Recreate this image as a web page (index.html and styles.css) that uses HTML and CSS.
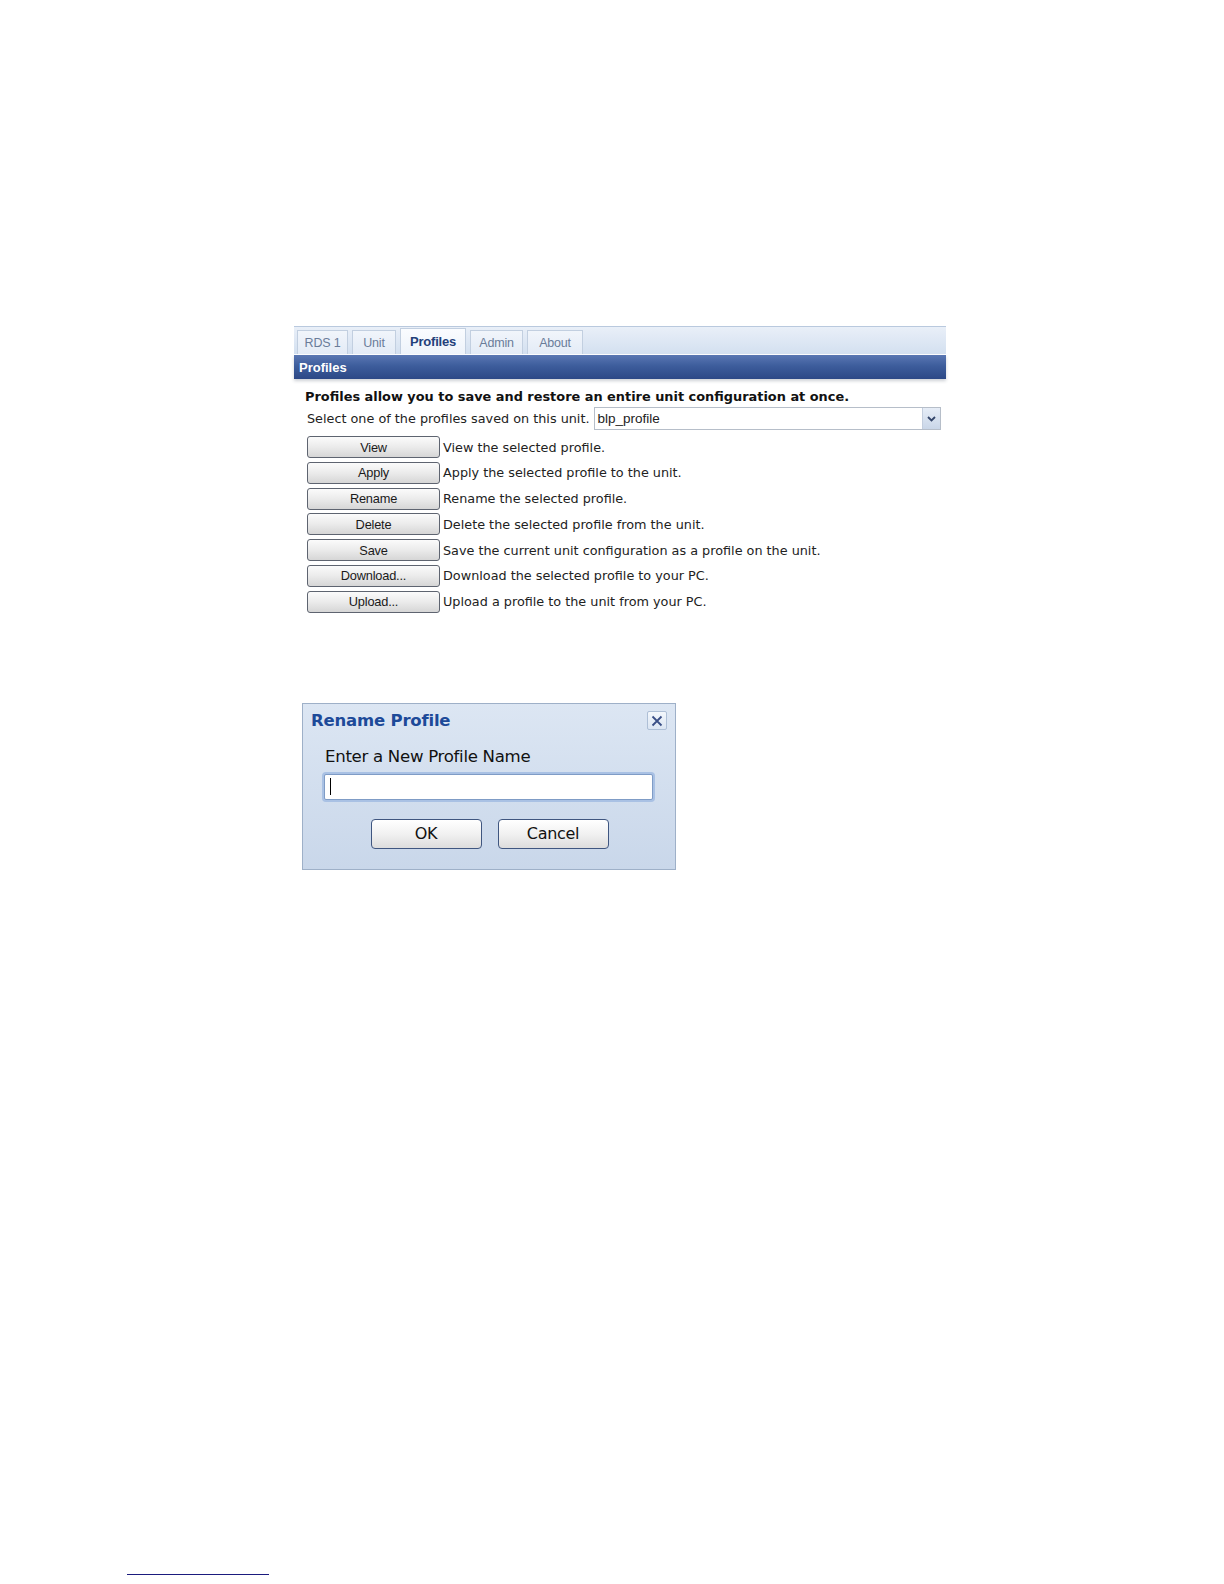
FILE: index.html
```html
<!DOCTYPE html>
<html>
<head>
<meta charset="utf-8">
<link rel="stylesheet" href="styles.css">
</head>
<body>
<div class="page">
  <div class="panel">
    <div class="tabbar">
      <span class="tab">RDS 1</span>
      <span class="tab">Unit</span>
      <span class="tab active">Profiles</span>
      <span class="tab">Admin</span>
      <span class="tab">About</span>
    </div>
    <div class="header">Profiles</div>
    <div class="content">
      <p class="intro">Profiles allow you to save and restore an entire unit configuration at once.</p>
      <div class="selectrow">
        <span class="selectlabel">Select one of the profiles saved on this unit.</span>
        <div class="select">
          <span class="selectval">blp_profile</span>
          <span class="selectbtn">
            <svg width="9" height="6" viewBox="0 0 9 6"><path d="M1 1 L4.5 4.5 L8 1" fill="none" stroke="#34466a" stroke-width="1.8"/></svg>
          </span>
        </div>
      </div>
      <div class="actions">
        <div class="row"><span class="btn">View</span><span class="desc">View the selected profile.</span></div>
        <div class="row"><span class="btn">Apply</span><span class="desc">Apply the selected profile to the unit.</span></div>
        <div class="row"><span class="btn">Rename</span><span class="desc">Rename the selected profile.</span></div>
        <div class="row"><span class="btn">Delete</span><span class="desc">Delete the selected profile from the unit.</span></div>
        <div class="row"><span class="btn">Save</span><span class="desc">Save the current unit configuration as a profile on the unit.</span></div>
        <div class="row"><span class="btn">Download...</span><span class="desc">Download the selected profile to your PC.</span></div>
        <div class="row"><span class="btn">Upload...</span><span class="desc">Upload a profile to the unit from your PC.</span></div>
      </div>
    </div>
  </div>

  <div class="dialog">
    <div class="dlg-head">
      <span class="dlg-title">Rename Profile</span>
      <span class="dlg-close">
        <svg width="14" height="14" viewBox="0 0 14 14"><path d="M2.5 2.5 L11.5 11.5 M11.5 2.5 L2.5 11.5" stroke="#3a4f86" stroke-width="1.8" fill="none"/></svg>
      </span>
    </div>
    <div class="dlg-label">Enter a New Profile Name</div>
    <div class="dlg-input"><span class="caret"></span></div>
    <div class="dlg-buttons">
      <span class="dbtn">OK</span>
      <span class="dbtn">Cancel</span>
    </div>
  </div>

  <div class="footrule"></div>
</div>
</body>
</html>
```

FILE: styles.css
```css
html, body {
  margin: 0;
  padding: 0;
  background: #ffffff;
}

.page {
  width: 1224px;
  height: 1584px;
  padding-top: 326px;
  box-sizing: border-box;
  display: flex;
  flex-direction: column;
}

.panel {
  margin-left: 294px;
  width: 652px;
  font-family: "DejaVu Sans", Verdana, sans-serif;
}

.tabbar {
  height: 28px;
  box-sizing: border-box;
  border-top: 1px solid #b9c9de;
  background: linear-gradient(#e9eff8, #d3e0f0);
  display: flex;
  align-items: flex-end;
  gap: 4px;
  padding-left: 3px;
}

.tab {
  height: 24px;
  box-sizing: border-box;
  border: 1px solid #c2cfe0;
  border-bottom: none;
  background: linear-gradient(#f1f5fb, #e3ebf6);
  font-family: "Liberation Sans", Tahoma, sans-serif;
  font-size: 12.5px;
  color: #6a7c99;
  display: flex;
  align-items: center;
  justify-content: center;
  white-space: nowrap;
  letter-spacing: -0.2px;
}

.tab:nth-child(1) { width: 51px; }
.tab:nth-child(2) { width: 44px; }
.tab:nth-child(3) { width: 66px; }
.tab:nth-child(4) { width: 53px; }
.tab:nth-child(5) { width: 56px; }

.tab.active {
  background: linear-gradient(#fafcff, #eef3fa);
  color: #23407a;
  font-weight: bold;
  font-size: 13px;
  height: 26px;
}

.header {
  height: 24px;
  margin-top: 1px;
  background: linear-gradient(#5a77b3, #3d5d9c 45%, #2c4886);
  color: #ffffff;
  font-family: "Liberation Sans", Tahoma, sans-serif;
  font-weight: bold;
  font-size: 13px;
  display: flex;
  align-items: center;
  padding-left: 5px;
  box-shadow: 0 2px 3px rgba(60, 70, 90, 0.25);
}

.content {
  padding: 9px 0 0 11px;
}

.intro {
  margin: 0;
  font-weight: bold;
  font-size: 12.9px;
  color: #111111;
  height: 18px;
  line-height: 18px;
}

.selectrow {
  display: flex;
  align-items: center;
  margin-top: 1px;
  height: 23px;
  margin-left: 2px;
}

.selectlabel {
  font-size: 12.8px;
  color: #222222;
  margin-right: 4px;
  white-space: nowrap;
}

.select {
  flex: 1;
  margin-right: 5px;
  height: 23px;
  box-sizing: border-box;
  border: 1px solid #b6bec9;
  background: #ffffff;
  display: flex;
  align-items: center;
}

.selectval {
  flex: 1;
  font-family: "Liberation Sans", Tahoma, sans-serif;
  font-size: 13.5px;
  color: #222222;
  padding-left: 3px;
}

.selectbtn {
  width: 18px;
  height: 21px;
  box-sizing: border-box;
  border-left: 1px solid #c3cede;
  background: linear-gradient(#e6edf7, #c9d6e8);
  display: flex;
  align-items: center;
  justify-content: center;
}

.actions {
  margin-top: 6px;
  margin-left: 2px;
  display: flex;
  flex-direction: column;
  gap: 3.8px;
}

.row {
  display: flex;
  align-items: center;
  height: 22px;
}

.btn {
  width: 133px;
  height: 22px;
  box-sizing: border-box;
  border: 1px solid #5e6470;
  border-radius: 3px;
  background: linear-gradient(#fbfbfb, #ebebeb 50%, #d6d6d6);
  font-family: "Liberation Sans", Tahoma, sans-serif;
  font-size: 12.8px;
  color: #1a1a1a;
  display: flex;
  align-items: center;
  justify-content: center;
  letter-spacing: -0.2px;
  flex-shrink: 0;
}

.desc {
  margin-left: 3px;
  font-size: 12.8px;
  color: #222222;
  white-space: nowrap;
}

/* Dialog */
.dialog {
  margin-top: 90px;
  margin-left: 302px;
  width: 374px;
  height: 167px;
  box-sizing: border-box;
  border: 1px solid #9eb0c8;
  background: linear-gradient(#dce6f3, #c9d7ea);
  font-family: "DejaVu Sans", "Lucida Grande", sans-serif;
  padding: 7px 8px 0 8px;
}

.dlg-head {
  display: flex;
  justify-content: space-between;
  align-items: center;
  height: 20px;
}

.dlg-title {
  font-weight: bold;
  font-size: 16.5px;
  color: #1d4a99;
  letter-spacing: -0.2px;
}

.dlg-close {
  width: 20px;
  height: 19px;
  box-sizing: border-box;
  border: 1px solid #aebfd6;
  border-radius: 2px;
  background: linear-gradient(#f3f7fc, #dbe5f2);
  display: flex;
  align-items: center;
  justify-content: center;
}

.dlg-label {
  margin-top: 16px;
  margin-left: 14px;
  font-size: 16.6px;
  color: #111111;
  letter-spacing: -0.3px;
  height: 20px;
  line-height: 20px;
}

.dlg-input {
  margin-top: 7px;
  margin-left: 13px;
  width: 329px;
  height: 26px;
  box-sizing: border-box;
  border: 1px solid #7f9cc6;
  background: #ffffff;
  box-shadow: 0 0 0 2px #a9c1e4;
  border-radius: 2px;
  display: flex;
  align-items: center;
  padding-left: 5px;
}

.caret {
  width: 1px;
  height: 17px;
  background: #000000;
}

.dlg-buttons {
  display: flex;
  justify-content: center;
  gap: 16px;
  margin-top: 19px;
  padding-left: 1px;
}

.dbtn {
  width: 111px;
  height: 30px;
  box-sizing: border-box;
  border: 1px solid #3f5680;
  border-radius: 4px;
  background: linear-gradient(#ffffff, #f1f1f1 50%, #dcdcdc);
  font-family: "DejaVu Sans", "Lucida Grande", sans-serif;
  font-size: 16px;
  color: #111111;
  display: flex;
  align-items: center;
  justify-content: center;
  letter-spacing: -0.3px;
}

.footrule {
  margin-top: auto;
  margin-bottom: 9px;
  margin-left: 127px;
  width: 142px;
  height: 1.5px;
  background: #1b1b7e;
}
```
